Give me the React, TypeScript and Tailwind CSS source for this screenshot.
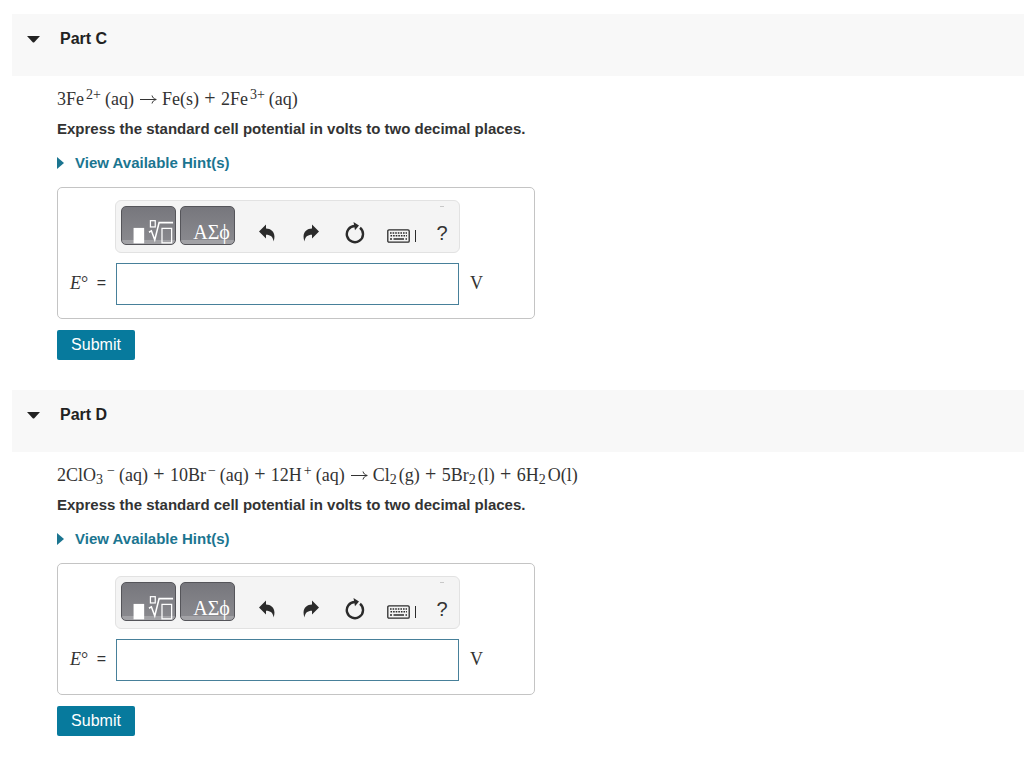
import React, { useState } from 'react';

interface PartProps {
  id: string;
  title: string;
  children: React.ReactNode;
}

const Sup: React.FC<{ children: React.ReactNode }> = ({ children }) => (
  <sup className="text-sm leading-none ml-0.5 mr-1 top-[-6px]">{children}</sup>
);

const Sub: React.FC<{ children: React.ReactNode }> = ({ children }) => (
  <sub className="text-sm leading-none mr-0.5 bottom-[-3px]">{children}</sub>
);

// Binary operator between two species
const Op: React.FC<{ children: React.ReactNode }> = ({ children }) => (
  <span className="inline-block w-[22px] text-center text-xl leading-6">{children}</span>
);

const Arrow = () => (
  <svg role="img" aria-label="yields" width="28" height="12" viewBox="0 0 28 12" className="inline-block align-baseline" fill="none" stroke="#333" strokeWidth="1">
    <path d="M6 6.5H22M18 2.5C18.6 4.6 20 6 22.3 6.5C20 7 18.6 8.4 18 10.5" />
  </svg>
);

const TemplatesIcon = () => (
  <svg width="55" height="39" viewBox="0 0 55 39" fill="none" stroke="#fff" strokeWidth="1.3">
    <rect x="12" y="22" width="11" height="16" fill="#fff" stroke="none" />
    <rect x="29.5" y="14.5" width="5" height="6.5" />
    <path d="M28 26.5L30.5 25L34 34.5L38.5 16.5H53" strokeWidth="1.6" />
    <rect x="41.5" y="22.5" width="10" height="15" />
  </svg>
);

const UndoIcon = () => (
  <svg width="16" height="18" viewBox="0 0 16 18" fill="#2b2b2b">
    <path d="M7 .5V4.5C13 4.5 17.5 9.5 14.5 17.5C14 12.8 11.5 10.8 7 10.8V14.5L0 7.5Z" />
  </svg>
);

const RedoIcon = () => (
  <svg width="16" height="18" viewBox="0 0 16 18" fill="#2b2b2b">
    <path d="M9 .5V4.5C3 4.5-1.5 9.5 1.5 17.5C2 12.8 4.5 10.8 9 10.8V14.5L16 7.5Z" />
  </svg>
);

const ResetIcon = () => (
  <svg width="20" height="22" viewBox="0 0 20 22" fill="none" stroke="#2b2b2b">
    <path d="M15 5.8A8.1 8.1 0 1 1 10 4" strokeWidth="2.4" />
    <path d="M8.5 0L14 3.6L10 8.2Z" fill="#2b2b2b" stroke="none" />
  </svg>
);

const KeyboardIcon = () => (
  <svg width="30" height="14" viewBox="0 0 30 14" fill="none" stroke="#2b2b2b">
    <rect x=".8" y=".8" width="21.4" height="12.4" rx="1.2" strokeWidth="1.3" />
    <path d="M3 4H20" strokeWidth="1.5" strokeDasharray="1.6 1" />
    <path d="M3.5 6.8H20" strokeWidth="1.5" strokeDasharray="1.6 1" />
    <path d="M3 10H5M6.5 10H17M18.5 10H20" strokeWidth="1.6" />
    <path d="M28.5 1V13" />
  </svg>
);

const paletteButton =
  'flex items-center justify-center w-[55px] h-[39px] rounded-[5px] border border-[#55555a] bg-linear-to-b from-[#77777d] from-0% via-[#88888d] via-88% to-[#a2a2a6] to-90% text-white overflow-hidden';

const AnswerBox: React.FC<{ id: string }> = ({ id }) => {
  const [value, setValue] = useState('');

  return (
    <div className="max-w-[478px] mt-3.5 pt-3 pb-[13px] pl-3 border border-[#c4c4c4] rounded-[5px]">
      <div className="flex items-start ml-[45px] w-[345px] h-[53px] pt-[5px] pl-[5px] bg-[#f4f4f4] border border-[#e2e2e2] rounded-md">
        <div className="flex gap-1 mr-2.5">
          <button type="button" title="Templates" className={paletteButton}>
            <TemplatesIcon />
          </button>
          <button type="button" title="Symbols" className={paletteButton}>
            <span className="font-['Liberation_Serif','DejaVu_Serif',serif] text-xl leading-5 pt-3 pl-2">ΑΣϕ</span>
          </button>
        </div>
        <button type="button" title="Undo" className="flex justify-center w-11 pt-[18px]"><UndoIcon /></button>
        <button type="button" title="Redo" className="flex justify-center w-11 pt-[18px]"><RedoIcon /></button>
        <button type="button" title="Reset" className="flex justify-center w-11 pt-4"><ResetIcon /></button>
        <button type="button" title="Keyboard shortcuts" className="flex justify-center w-[50px] pt-[23px]"><KeyboardIcon /></button>
        <button type="button" title="Help" className="flex flex-col items-center w-[30px] text-xl leading-6 text-[#333]">
          <span className="w-1 h-px bg-[#c8c8c8] mb-3.5" />
          ?
        </button>
      </div>
      <div className="flex items-center mt-2.5 font-['Liberation_Serif',serif] text-lg leading-6 text-[#333]">
        <label htmlFor={`answer-${id}`} className="flex justify-between w-[46px] pr-2.5 pb-0.5">
          <span><i>E</i>°</span>
          <span className="font-['Liberation_Sans',sans-serif] text-base leading-6">=</span>
        </label>
        <input
          id={`answer-${id}`}
          type="text"
          value={value}
          onChange={(e) => setValue(e.target.value)}
          className="w-[343px] h-[42px] px-2 bg-white border border-[#47809a] focus:outline-none"
        />
        <span className="ml-[11px] pb-0.5">V</span>
      </div>
    </div>
  );
};

const Part: React.FC<PartProps> = ({ id, title, children }) => {
  const [open, setOpen] = useState(true);

  return (
    <section className="pb-[30px]">
      <h2 className="h-[62px] bg-[#f8f8f8]">
        <button
          type="button"
          aria-expanded={open}
          onClick={() => setOpen(!open)}
          className="flex items-center w-full pt-[15px] pl-[15px] text-base leading-5 font-bold text-[#222]"
        >
          <svg width="13" height="7" viewBox="0 0 13 7" className="mr-5" fill="#222">
            <path d="M0 0H13L7.5 6Q6.5 7 5.5 6Z" />
          </svg>
          {title}
        </button>
      </h2>

      {open && (
        <div className="pt-2.5 pl-[45px]">
          <div className="min-h-6 font-['Liberation_Serif',serif] text-lg leading-6">{children}</div>
          <p className="mt-2 text-[15px] leading-5 font-bold">
            Express the standard cell potential in volts to two decimal places.
          </p>
          <a href="#hints" className="flex items-center mt-3.5 text-[15px] leading-5 font-bold text-[#1b7590]">
            <svg width="7" height="12" viewBox="0 0 7 12" className="mr-[11px]" fill="#1b7590">
              <path d="M0 0L7 6L0 12Z" />
            </svg>
            View Available Hint(s)
          </a>
          <AnswerBox id={id} />
          <button type="submit" className="w-[78px] h-[30px] mt-[11px] rounded-xs bg-[#077a9d] text-base leading-5 text-white">
            Submit
          </button>
        </div>
      )}
    </section>
  );
};

export default function App() {
  return (
    <main className="min-h-screen pt-3.5 pl-3 bg-white text-[#333] font-['Liberation_Sans',sans-serif]">
      <Part id="c" title="Part C">
        3Fe<Sup>2+</Sup>(aq)<Arrow />Fe(s)<Op>+</Op>2Fe<Sup>3+</Sup>(aq)
      </Part>
      <Part id="d" title="Part D">
        2ClO<Sub>3</Sub><Sup>−</Sup>(aq)<Op>+</Op>10Br<Sup>−</Sup>(aq)<Op>+</Op>12H<Sup>+</Sup>(aq)
        <Arrow />
        Cl<Sub>2</Sub>(g)<Op>+</Op>5Br<Sub>2</Sub>(l)<Op>+</Op>6H<Sub>2</Sub>O(l)
      </Part>
    </main>
  );
}
